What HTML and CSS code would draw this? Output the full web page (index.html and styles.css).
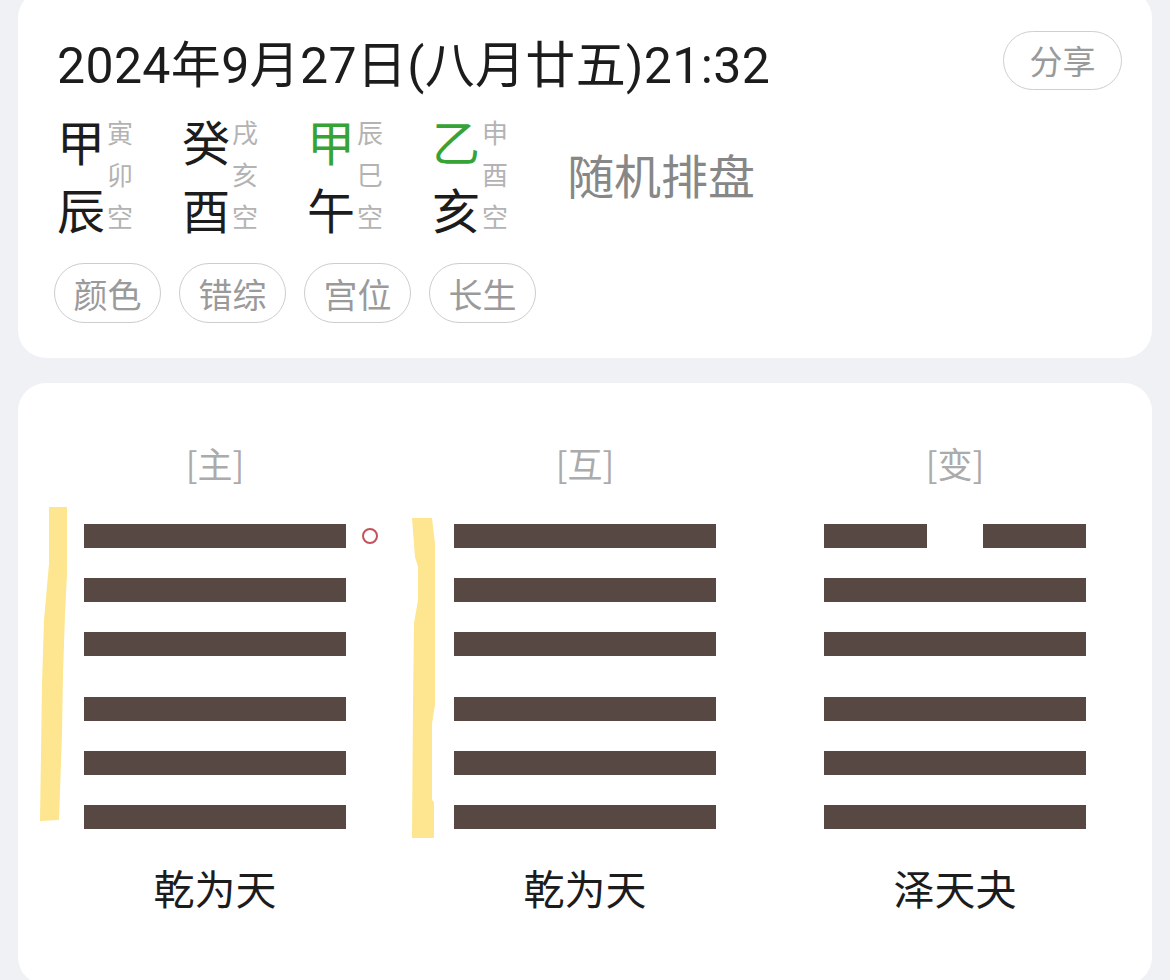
FILE: index.html
```html
<!DOCTYPE html>
<html lang="zh-CN">
<head>
<meta charset="utf-8">
<title>排盘</title>
<link rel="stylesheet" href="styles.css">
</head>
<body>
<div class="page">
  <section class="card info">
    <div class="head">
      <h1 class="date">2024年9月27日(八月廿五)21:32</h1>
      <button class="share">分享</button>
    </div>
    <div class="pillars">
      <div class="pillar">
        <div class="gz"><span>甲</span><span>辰</span></div>
        <div class="xk"><span>寅</span><span>卯</span><span>空</span></div>
      </div>
      <div class="pillar">
        <div class="gz"><span>癸</span><span>酉</span></div>
        <div class="xk"><span>戌</span><span>亥</span><span>空</span></div>
      </div>
      <div class="pillar">
        <div class="gz"><span class="green">甲</span><span>午</span></div>
        <div class="xk"><span>辰</span><span>巳</span><span>空</span></div>
      </div>
      <div class="pillar">
        <div class="gz"><span class="green">乙</span><span>亥</span></div>
        <div class="xk"><span>申</span><span>酉</span><span>空</span></div>
      </div>
      <div class="random">随机排盘</div>
    </div>
    <div class="tags">
      <span class="tag">颜色</span>
      <span class="tag">错综</span>
      <span class="tag">宫位</span>
      <span class="tag">长生</span>
    </div>
  </section>

  <section class="card gua">
    <div class="col">
      <div class="label">[主]</div>
      <div class="hex">
        <svg class="mark" width="40" height="340" viewBox="0 0 40 340" aria-hidden="true">
          <path d="M15 3 L33 3 L33 70 L31 110 L29 170 L28 230 L25 316 L6 317 L7 250 L8 180 L10 116 L15 60 Z" fill="#fde68f"/>
        </svg>
        <div class="yao"></div>
        <div class="yao"></div>
        <div class="yao"></div>
        <div class="yao lower"></div>
        <div class="yao"></div>
        <div class="yao"></div>
        <span class="moving"></span>
      </div>
      <div class="name">乾为天</div>
    </div>
    <div class="col">
      <div class="label">[互]</div>
      <div class="hex">
        <svg class="mark" width="40" height="340" viewBox="0 0 40 340" aria-hidden="true">
          <path d="M8 14 L28 14 L31 40 L31 200 L28 220 L28 296 L30 298 L30 334 L8 334 L9 200 L10 119 L14 96 L14 63 L11 53 Z" fill="#fde68f"/>
        </svg>
        <div class="yao"></div>
        <div class="yao"></div>
        <div class="yao"></div>
        <div class="yao lower"></div>
        <div class="yao"></div>
        <div class="yao"></div>
      </div>
      <div class="name">乾为天</div>
    </div>
    <div class="col">
      <div class="label">[变]</div>
      <div class="hex">
        <div class="yao broken"><i></i><i></i></div>
        <div class="yao"></div>
        <div class="yao"></div>
        <div class="yao lower"></div>
        <div class="yao"></div>
        <div class="yao"></div>
      </div>
      <div class="name">泽天夬</div>
    </div>
  </section>
</div>
</body>
</html>
```

FILE: styles.css
```css
* {
  box-sizing: border-box;
}

html, body {
  margin: 0;
  padding: 0;
  background: #eff1f4;
  overflow: hidden;
}

body {
  font-family: Roboto, "Noto Sans CJK SC", sans-serif;
  color: #1c1c1c;
}

.page {
  padding: 0 18px;
  display: flex;
  flex-direction: column;
  gap: 25px;
  margin-top: -10px;
}

.card {
  background: #fff;
  border-radius: 28px;
}

/* ---------- info card ---------- */
.info {
  padding: 46px 30px 35px 39px;
  height: 368px;
}

.head {
  display: flex;
  justify-content: space-between;
  align-items: flex-start;
}

.date {
  margin: 0;
  font-weight: 400;
  font-size: 50px;
  line-height: 60px;
  color: #1c1c1c;
  letter-spacing: 0.35px;
}

.share {
  margin-top: -5px;
  width: 119px;
  height: 59px;
  border: 1.5px solid #cfcfcf;
  border-radius: 30px;
  background: #fff;
  font-family: "Noto Sans CJK SC", sans-serif;
  font-size: 33px;
  color: #9a9a9a;
  padding: 0;
  line-height: 1;
}

.pillars {
  display: flex;
  align-items: center;
  margin-top: 10px;
  gap: 49px;
  font-family: "Noto Sans CJK SC", sans-serif;
}

.pillar {
  display: flex;
  align-items: center;
  gap: 2px;
}

.gz {
  display: flex;
  flex-direction: column;
  font-size: 48px;
  line-height: 68px;
  color: #1c1c1c;
}

.gz .green {
  color: #36a336;
}

.xk {
  display: flex;
  flex-direction: column;
  font-size: 26px;
  line-height: 42px;
  color: #b3b3b3;
}

.random {
  margin-left: 10px;
  font-size: 47px;
  line-height: 60px;
  color: #878787;
}

.tags {
  display: flex;
  gap: 18px;
  margin-top: 21px;
  margin-left: -3px;
}

.tag {
  width: 107px;
  height: 60px;
  border: 1.5px solid #cdcdcd;
  border-radius: 30px;
  display: flex;
  align-items: center;
  justify-content: center;
  font-family: "Noto Sans CJK SC", sans-serif;
  font-size: 34px;
  color: #9a9a9a;
}

/* ---------- gua card ---------- */
.gua {
  display: flex;
  padding: 60px 12px 74px;
}

.col {
  width: 370px;
  display: flex;
  flex-direction: column;
  align-items: center;
}

.label {
  font-family: "Noto Sans CJK SC", sans-serif;
  font-size: 35px;
  line-height: 40px;
  color: #ababab;
}

.hex {
  position: relative;
  width: 262px;
  margin-top: 41px;
  display: flex;
  flex-direction: column;
  gap: 30px;
}

.yao {
  height: 24px;
  background: #574843;
}

.yao.lower {
  margin-top: 11px;
}

.yao.broken {
  background: none;
  display: flex;
  justify-content: space-between;
}

.yao.broken i {
  display: block;
  width: 103px;
  height: 24px;
  background: #574843;
}

.mark {
  position: absolute;
  left: -50px;
  top: -20px;
}

.moving {
  position: absolute;
  left: calc(100% + 16px);
  top: 4px;
  width: 16px;
  height: 16px;
  border: 2px solid #c4525a;
  border-radius: 50%;
}

.name {
  margin-top: 34px;
  font-family: "Noto Sans CJK SC", sans-serif;
  font-size: 41px;
  line-height: 48px;
  color: #1c1c1c;
}
```
